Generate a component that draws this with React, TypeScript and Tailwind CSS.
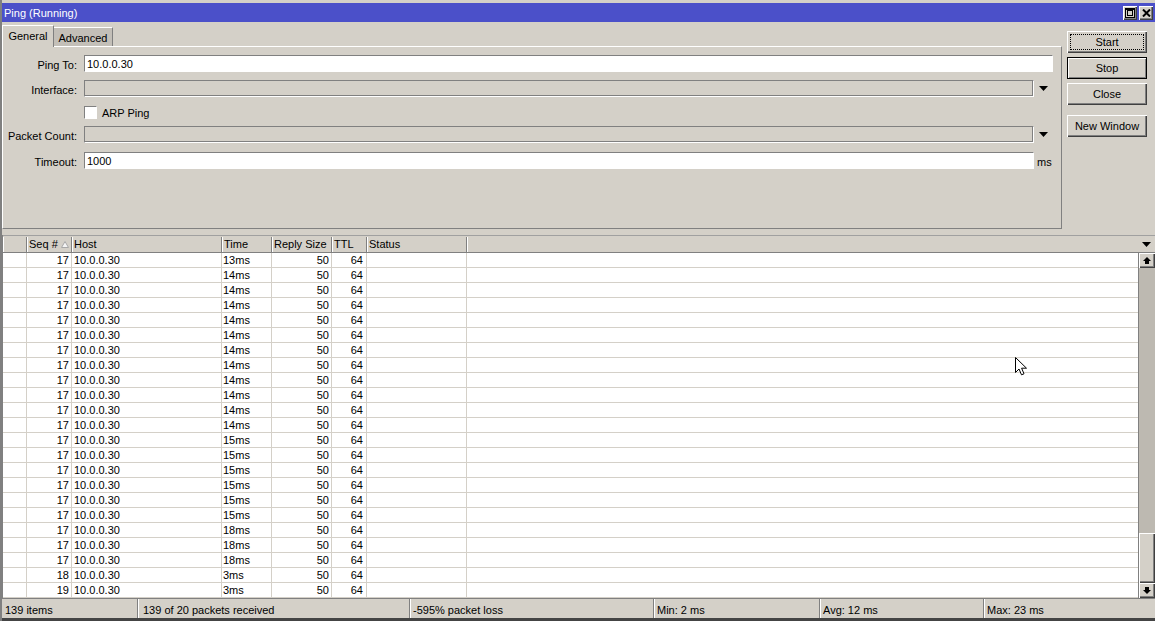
import React from 'react';

const raised =
  'shadow-[inset_1px_1px_0_#ffffff,inset_-1px_-1px_0_#404040,inset_-2px_-2px_0_#808080]';

const times: string[] = [
  '13ms',
  '14ms', '14ms', '14ms', '14ms', '14ms', '14ms', '14ms', '14ms', '14ms', '14ms', '14ms',
  '15ms', '15ms', '15ms', '15ms', '15ms', '15ms',
  '18ms', '18ms', '18ms',
  '3ms', '3ms',
];
const seqs: number[] = times.map((_, i) => (i < 21 ? 17 : i === 21 ? 18 : 19));

function DownArrow() {
  return (
    <svg width="9" height="5" viewBox="0 0 9 5">
      <path d="M0 0 H9 L4.5 5 Z" fill="#000" />
    </svg>
  );
}

function Label({ text }: { text: string }) {
  return <div className="w-[74px] text-right shrink-0 leading-none pt-[3px]">{text}</div>;
}

function Input({ value, width, disabled }: { value?: string; width: string; disabled?: boolean }) {
  return (
    <div
      className={`${width} h-[17px] ml-[7px] flex items-center pl-[2px] pt-[2px] leading-none border-t border-l border-t-[#808080] border-l-[#808080] border-b border-r border-b-[#ffffff] border-r-[#ffffff] ${
        disabled ? 'bg-[#d4d0c8] shadow-[inset_-1px_-1px_0_#808080]' : 'bg-white'
      }`}
    >
      {value}
    </div>
  );
}

function Button({ label, kind }: { label: string; kind?: 'focus' | 'default' }) {
  if (kind === 'default') {
    return (
      <div className="w-[80px] h-[22px] border border-black bg-[#d4d0c8] flex items-center justify-center shadow-[inset_1px_1px_0_#ffffff,inset_-1px_-1px_0_#808080]">
        {label}
      </div>
    );
  }
  return (
    <div
      className={`w-[80px] h-[22px] bg-[#d4d0c8] flex items-center justify-center ${raised} ${
        kind === 'focus' ? 'outline-1 outline-dotted outline-black -outline-offset-4' : ''
      }`}
    >
      {label}
    </div>
  );
}

export default function App() {
  return (
    <div className="relative w-[1155px] h-[621px] overflow-hidden bg-[#d4d0c8] text-black text-[11px] font-['Liberation_Sans',Arial,sans-serif] flex flex-col border-l-2 border-l-[#808080]">
      {/* top edge */}
      <div className="h-[3px] shrink-0" />
      {/* title bar */}
      <div className="h-[19px] shrink-0 bg-[#4b50c9] text-white flex items-center pl-[2px] pr-[2px]">
        <span className="leading-none pt-[2px]">Ping (Running)</span>
        <div className="ml-auto flex gap-[2px] items-center">
          <div className={`w-[14px] h-[14px] bg-[#d4d0c8] flex items-center justify-center ${raised}`}>
            <svg width="10" height="10" viewBox="0 0 10 10">
              <rect x="0.5" y="0.5" width="9" height="9" fill="none" stroke="#000" />
              <rect x="2.5" y="2.5" width="5" height="5" fill="none" stroke="#000" />
              <rect x="0.5" y="0.5" width="9" height="1.5" fill="#000" />
            </svg>
          </div>
          <div className={`w-[14px] h-[14px] bg-[#d4d0c8] flex items-center justify-center ${raised}`}>
            <svg width="9" height="8" viewBox="0 0 9 8">
              <path d="M1 0.5 L8 7.5 M8 0.5 L1 7.5" stroke="#000" strokeWidth="2" />
            </svg>
          </div>
        </div>
      </div>

      {/* upper area */}
      <div className="flex shrink-0">
        <div className="w-[1060px] flex flex-col">
          {/* tabs */}
          <div className="h-[24px] flex items-end">
            <div className="relative z-10 w-[52px] h-[22px] -mb-px bg-[#d4d0c8] border-t border-l border-t-white border-l-white border-r border-r-[#808080] flex items-center justify-center">
              General
            </div>
            <div className="w-[59px] h-[19px] bg-[#c3bfb8] border-t border-t-white border-r border-r-[#808080] flex items-center justify-center pt-[2px]">
              Advanced
            </div>
          </div>
          {/* panel */}
          <div className="h-[183px] border-t border-l border-t-white border-l-white border-r border-b border-r-[#808080] border-b-[#808080] flex flex-col">
            <div className="mt-[8px] flex items-center">
              <Label text="Ping To:" />
              <Input value="10.0.0.30" width="w-[969px]" />
            </div>
            <div className="mt-[8px] flex items-center">
              <Label text="Interface:" />
              <Input width="w-[950px]" disabled />
              <div className="w-[19px] flex justify-center">
                <DownArrow />
              </div>
            </div>
            <div className="mt-[9px] h-[13px] flex items-center">
              <div className="w-[81px] shrink-0" />
              <div className="w-[13px] h-[13px] bg-white border-t border-l border-t-[#808080] border-l-[#808080] border-b border-r border-b-white border-r-white" />
              <span className="ml-[5px] leading-none pt-[2px]">ARP Ping</span>
            </div>
            <div className="mt-[7px] flex items-center">
              <Label text="Packet Count:" />
              <Input width="w-[950px]" disabled />
              <div className="w-[19px] flex justify-center">
                <DownArrow />
              </div>
            </div>
            <div className="mt-[9px] flex items-center">
              <Label text="Timeout:" />
              <Input value="1000" width="w-[950px]" />
              <span className="ml-[3px] leading-none pt-[3px]">ms</span>
            </div>
          </div>
        </div>
        {/* buttons */}
        <div className="flex flex-col pl-[5px] pt-[9px]">
          <Button label="Start" kind="focus" />
          <div className="mt-[4px]">
            <Button label="Stop" kind="default" />
          </div>
          <div className="mt-[4px]">
            <Button label="Close" />
          </div>
          <div className="mt-[10px]">
            <Button label="New Window" />
          </div>
        </div>
      </div>

      {/* table */}
      <div className="mt-[6px] h-[363px] shrink-0 flex border-l border-l-[#808080]">
        <div className="flex-1 flex flex-col bg-white">
          {/* header */}
          <div className="h-[18px] flex bg-[#d4d0c8] border-t border-t-[#a0a0a0] border-b border-b-[#808080] pt-[1px]">
            <div className="w-[24px] border-r border-r-[#808080] shadow-[inset_1px_0_0_#fff]" />
            <div className="w-[45px] border-r border-r-[#808080] shadow-[inset_1px_0_0_#fff] flex items-center pl-[2px]">
              Seq #
              <svg className="ml-[3px]" width="8" height="7" viewBox="0 0 8 7">
                <path d="M4 0.5 L7.5 6.5 H0.5 Z" fill="#f4f4f4" stroke="#a8a8a8" strokeWidth="1" />
              </svg>
            </div>
            <div className="w-[150px] border-r border-r-[#808080] shadow-[inset_1px_0_0_#fff] flex items-center pl-[2px]">Host</div>
            <div className="w-[50px] border-r border-r-[#808080] shadow-[inset_1px_0_0_#fff] flex items-center pl-[2px]">Time</div>
            <div className="w-[60px] border-r border-r-[#808080] shadow-[inset_1px_0_0_#fff] flex items-center pl-[2px]">Reply Size</div>
            <div className="w-[35px] border-r border-r-[#808080] shadow-[inset_1px_0_0_#fff] flex items-center pl-[2px]">TTL</div>
            <div className="w-[100px] border-r border-r-[#808080] shadow-[inset_1px_0_0_#fff] flex items-center pl-[2px]">Status</div>
            <div className="flex-1 shadow-[inset_1px_0_0_#fff]" />
          </div>
          {/* rows */}
          {times.map((t, i) => (
            <div key={i} className="h-[15px] flex border-b border-b-[#d4d0c8] leading-none">
              <div className="w-[24px] border-r border-r-[#d4d0c8]" />
              <div className="w-[45px] border-r border-r-[#d4d0c8] flex items-center justify-end pr-[2px]">{seqs[i]}</div>
              <div className="w-[150px] border-r border-r-[#d4d0c8] flex items-center pl-[2px]">10.0.0.30</div>
              <div className="w-[50px] border-r border-r-[#d4d0c8] flex items-center pl-[1px]">{t}</div>
              <div className="w-[60px] border-r border-r-[#d4d0c8] flex items-center justify-end pr-[2px]">50</div>
              <div className="w-[35px] border-r border-r-[#d4d0c8] flex items-center justify-end pr-[3px]">64</div>
              <div className="w-[100px] border-r border-r-[#d4d0c8]" />
              <div className="flex-1" />
            </div>
          ))}
        </div>
        {/* scrollbar column */}
        <div className="w-[17px] flex flex-col">
          <div className="h-[18px] bg-[#d4d0c8] border-t border-t-[#a0a0a0] border-b border-b-[#808080] flex items-center justify-center">
            <DownArrow />
          </div>
          <div className="flex-1 flex flex-col bg-[#bdb9b1] border-l border-l-[#808080]">
            <div className={`h-[15px] bg-[#d4d0c8] flex items-center justify-center ${raised}`}>
              <svg width="8" height="7" viewBox="0 0 8 7">
                <path d="M4 0 L8 4 H6 V7 H2 V4 H0 Z" fill="#000" />
              </svg>
            </div>
            <div className="flex-1" />
            <div className={`h-[50px] bg-[#d4d0c8] ${raised}`} />
            <div className={`h-[15px] bg-[#d4d0c8] flex items-center justify-center ${raised}`}>
              <svg width="8" height="7" viewBox="0 0 8 7">
                <path d="M4 7 L8 3 H6 V0 H2 V3 H0 Z" fill="#000" />
              </svg>
            </div>
          </div>
        </div>
      </div>

      {/* status bar */}
      <div className="h-[20px] shrink-0 flex items-stretch border-t border-t-[#808080] leading-none">
        <div className="w-[135px] pl-[3px] pt-[6px]">139 items</div>
        <div className="w-[2px] border-l border-l-[#808080] border-r border-r-white" />
        <div className="w-[270px] pl-[4px] pt-[6px]">139 of 20 packets received</div>
        <div className="w-[2px] border-l border-l-[#808080] border-r border-r-white" />
        <div className="w-[242px] pl-[2px] pt-[6px]">-595% packet loss</div>
        <div className="w-[2px] border-l border-l-[#808080] border-r border-r-white" />
        <div className="w-[164px] pl-[2px] pt-[6px]">Min: 2 ms</div>
        <div className="w-[2px] border-l border-l-[#808080] border-r border-r-white" />
        <div className="w-[162px] pl-[2px] pt-[6px]">Avg: 12 ms</div>
        <div className="w-[2px] border-l border-l-[#808080] border-r border-r-white" />
        <div className="flex-1 pl-[2px] pt-[6px]">Max: 23 ms</div>
      </div>
      <div className="h-[3px] shrink-0 bg-[#444444]" />

      {/* mouse cursor */}
      <svg className="absolute left-[1013px] top-[357px]" width="13" height="20" viewBox="0 0 13 20">
        <path
          d="M0.5 0.5 L0.5 15.5 L4 12 L6.5 17.8 L9 16.8 L6.6 11.2 L11.5 11.2 Z"
          fill="#fff"
          stroke="#000"
          strokeWidth="1"
        />
      </svg>
    </div>
  );
}
